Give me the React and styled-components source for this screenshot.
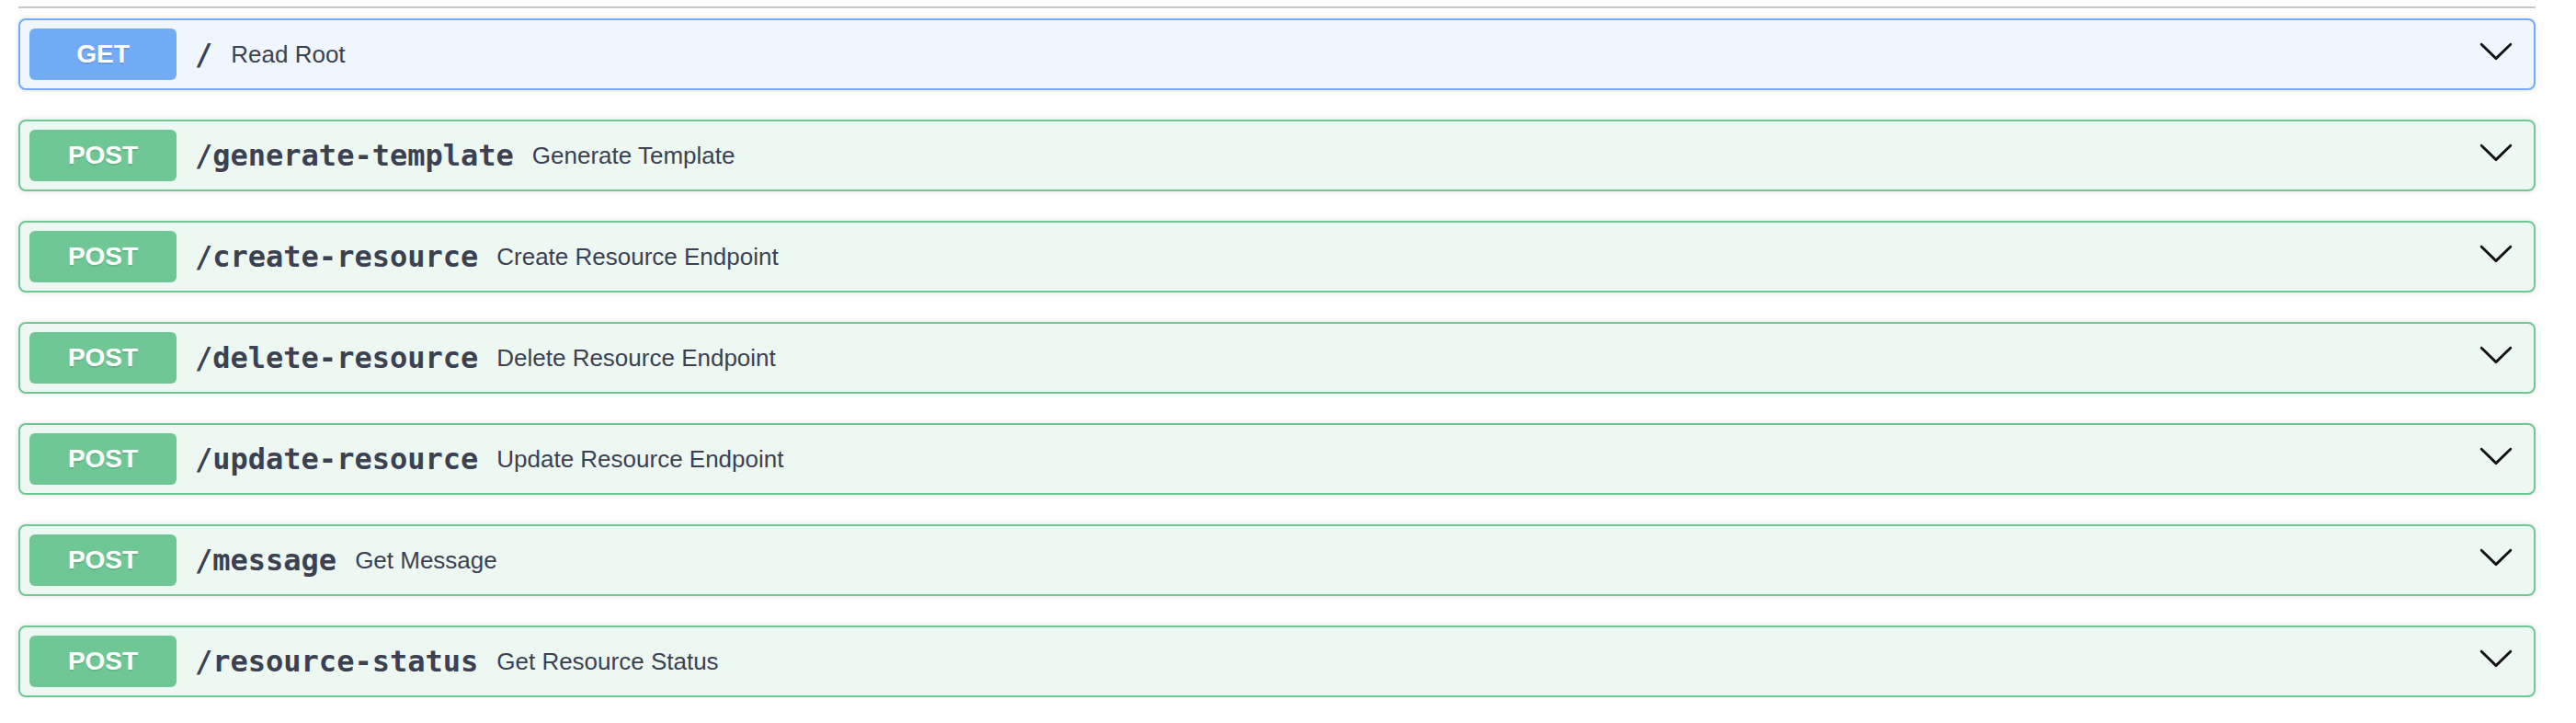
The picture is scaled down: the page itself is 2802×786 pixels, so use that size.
import React from "react";
import styled, { createGlobalStyle } from "styled-components";

const Global = createGlobalStyle`
  html, body { margin: 0; padding: 0; background: #ffffff; }
  body { font-family: "Liberation Sans", Arial, sans-serif; }
`;

const METHODS = {
  get: { main: "#73acf6", bg: "#eff6fe" },
  post: { main: "#6fc795", bg: "#eef8f3" },
};

const Page = styled.div`
  padding: 0 44px 0 20px;
`;

const TagLine = styled.div`
  height: 7px;
  border-bottom: 2px solid #c6c7cd;
`;

const List = styled.div`
  display: flex;
  flex-direction: column;
  gap: 32px;
  padding-top: 11px;
`;

const Block = styled.div`
  display: flex;
  align-items: center;
  box-sizing: border-box;
  height: 78px;
  padding: 0 10px;
  border: 2px solid ${(p) => METHODS[p.$m].main};
  border-radius: 8px;
  background: ${(p) => METHODS[p.$m].bg};
  box-shadow: 0 0 6px rgba(0, 0, 0, 0.12);
`;

const MethodBadge = styled.span`
  flex: none;
  width: 160px;
  height: 56px;
  display: flex;
  align-items: center;
  justify-content: center;
  border-radius: 6px;
  background: ${(p) => METHODS[p.$m].main};
  color: #fff;
  font-family: "Liberation Sans", Arial, sans-serif;
  font-weight: 700;
  font-size: 28px;
  text-shadow: 0 2px 0 rgba(0, 0, 0, 0.1);
`;

const Path = styled.span`
  padding: 0 20px;
  font-family: "DejaVu Sans Mono", monospace;
  font-weight: 700;
  font-size: 32px;
  color: #3b4151;
  white-space: nowrap;
`;

const Desc = styled.span`
  flex: 1;
  font-family: "Liberation Sans", Arial, sans-serif;
  font-size: 26px;
  color: #3b4151;
  white-space: nowrap;
`;

const Arrow = styled.svg`
  flex: none;
  width: 40px;
  height: 40px;
  margin: 0 11px 8px 0;
`;

const rows = [
  { m: "get", path: "/", desc: "Read Root" },
  { m: "post", path: "/generate-template", desc: "Generate Template" },
  { m: "post", path: "/create-resource", desc: "Create Resource Endpoint" },
  { m: "post", path: "/delete-resource", desc: "Delete Resource Endpoint" },
  { m: "post", path: "/update-resource", desc: "Update Resource Endpoint" },
  { m: "post", path: "/message", desc: "Get Message" },
  { m: "post", path: "/resource-status", desc: "Get Resource Status" },
];

export default function App() {
  return (
    <Page>
      <Global />
      <TagLine />
      <List>
        {rows.map((r) => (
          <Block key={r.path} $m={r.m}>
            <MethodBadge $m={r.m}>{r.m.toUpperCase()}</MethodBadge>
            <Path>{r.path}</Path>
            <Desc>{r.desc}</Desc>
            <Arrow viewBox="0 0 20 20" aria-hidden="true">
              <path
                fill="#111"
                d="M17.418 6.109c.272-.268.709-.268.979 0s.271.701 0 .969l-7.908 7.83c-.27.268-.707.268-.979 0l-7.908-7.83c-.27-.268-.27-.701 0-.969.271-.268.709-.268.979 0L10 13.25l7.418-7.141z"
              />
            </Arrow>
          </Block>
        ))}
      </List>
    </Page>
  );
}
